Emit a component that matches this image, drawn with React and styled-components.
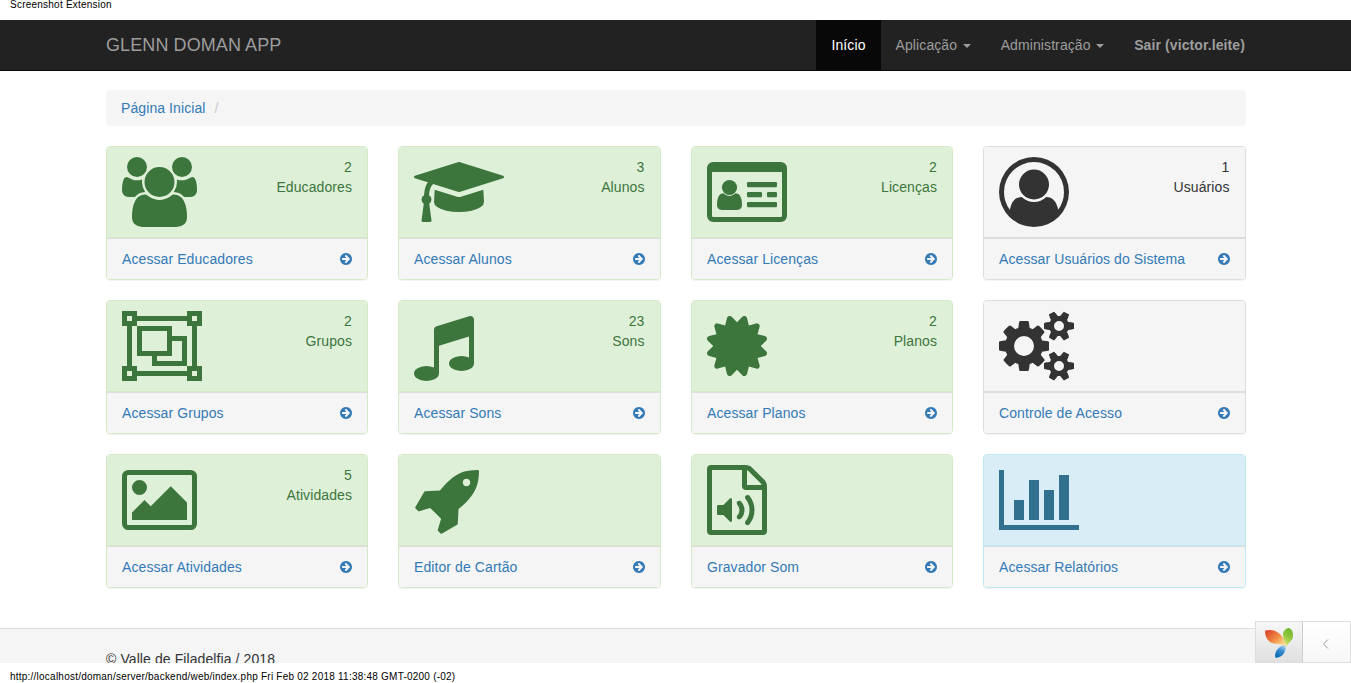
import React from "react";
import styled, { createGlobalStyle, css } from "styled-components";

const GlobalStyle = createGlobalStyle`
  * { box-sizing: border-box; }
  body {
    margin: 0;
    background: #fff;
    color: #333;
    font: 14px/20px "Liberation Sans", Arial, sans-serif;
    letter-spacing: 0.09px;
    overflow: hidden;
  }
  a { color: inherit; text-decoration: none; }
`;

const Sheet = styled.div`
  display: flex;
  flex-direction: column;
  height: 683px;
  overflow: hidden;
`;

const Caption = styled.div`
  flex: none;
  height: 20px;
  padding: 0 10px;
  overflow: hidden;
  color: #000;
  font-size: 10px;
  line-height: ${(p) => p.$line}px;
  letter-spacing: 0.23px;
  white-space: nowrap;
`;

const Viewport = styled.div`
  position: relative;
  flex: none;
  display: flex;
  flex-direction: column;
  height: 643px;
  overflow: hidden;
`;

const Container = styled.div`
  width: 1140px;
  margin: 0 auto;
`;

const Navbar = styled.header`
  flex: none;
  height: 51px;
  background: #222;
  border-bottom: 1px solid #080808;
`;

const NavbarInner = styled(Container)`
  display: flex;
  justify-content: space-between;
`;

const Brand = styled.a`
  padding: 15px 0 15px 0.5px;
  color: #9d9d9d;
  font-size: 18px;
`;

const Nav = styled.nav`
  display: flex;
  margin-right: -14.5px;
  letter-spacing: 0.1px;
`;

const NavLink = styled.a`
  display: flex;
  align-items: center;
  height: 50px;
  padding: 0 15px;
  color: #9d9d9d;
  font-weight: ${(p) => (p.$strong ? "bold" : "normal")};
  ${(p) => p.$active && css`
    color: #fff;
    background: #080808;
  `}
`;

const Caret = styled.span`
  margin: 1px 0 0 5.5px;
  border-top: 4px solid currentColor;
  border-left: 4px solid transparent;
  border-right: 4px solid transparent;
`;

const Main = styled(Container)`
  flex: none;
  height: 557px;
  padding-top: 19px;
`;

const Breadcrumb = styled.div`
  display: flex;
  height: 36px;
  margin-bottom: 20px;
  padding: 8px 15.5px;
  border-radius: 4px;
  background: #f5f5f5;
  color: #337ab7;
`;

const Slash = styled.span`
  padding-left: 9px;
  color: #ccc;
`;

const Grid = styled.div`
  display: grid;
  grid-template-columns: repeat(4, 1fr);
  gap: 20px 30px;
`;

const tones = {
  success: { bg: "#dff0d8", border: "#d6e9c6", color: "#3c763d" },
  plain: { bg: "#f5f5f5", border: "#ddd", color: "#333" },
  info: { bg: "#d9edf7", border: "#bce8f1", color: "#31708f" },
};

const PanelHead = styled.div`
  display: flex;
  justify-content: space-between;
  height: 91px;
  padding: 10px 15px;
  background: ${(p) => tones[p.$tone].bg};
  border-bottom: 1px solid ${(p) => tones[p.$tone].border};
  color: ${(p) => tones[p.$tone].color};
`;

const Stat = styled.div`
  text-align: right;
`;

const PanelFoot = styled.a`
  display: flex;
  align-items: center;
  justify-content: space-between;
  height: 41px;
  padding: 0 15px;
  border-top: 1px solid #ddd;
  background: #f5f5f5;
  color: #337ab7;
`;

/* Odd columns start on a half pixel, so their content is nudged onto whole ones. */
const Panel = styled.section`
  border: 1px solid ${(p) => tones[p.$tone].border};
  border-radius: 4px;
  overflow: hidden;
  box-shadow: 0 1px 1px rgba(0, 0, 0, 0.05);
  &:nth-child(odd) ${PanelHead}, &:nth-child(odd) ${PanelFoot} {
    padding-left: 15.5px;
  }
`;

const Glyph = styled.svg`
  flex: none;
  display: block;
  height: ${(p) => p.$size}px;
  fill: currentColor;
`;

const Footer = styled.footer`
  flex: 1;
  padding-top: 20px;
  border-top: 1px solid #ddd;
  background: #f5f5f5;
`;

const FooterText = styled(Container)`
  padding-left: 0.5px;
`;

const DebugBar = styled.div`
  position: absolute;
  right: 0;
  bottom: 0;
  display: flex;
  width: 96px;
  height: 42px;
  border: 1px solid #ddd;
`;

const DebugLogo = styled.div`
  display: flex;
  align-items: center;
  justify-content: center;
  width: 47px;
  padding-top: 2px;
  border-right: 1px solid #ccc;
  background: linear-gradient(#f7f7f7, #e0e0e0);
`;

const DebugToggle = styled.div`
  flex: 1;
  display: flex;
  align-items: center;
  justify-content: center;
  padding: 3px 1px 0 0;
  background: linear-gradient(#fff, #f7f7f7);
`;

/* Large icons: [viewBox, drawing]; every one is 70px high. */
const icons = {
  users: ["64 0 1920 1792", <path d="M657 896q-162 5-265 128h-134q-82 0-138-40.500t-56-118.500q0-353 124-353 6 0 43.500 21t97.500 42.500 119 21.500q67 0 133-23-5 37-5 66 0 139 81 256zm1071 637q0 120-73 189.500t-194 69.500h-874q-121 0-194-69.500t-73-189.500q0-53 3.500-103.500t14-109 26.500-108.500 43-97.500 62-81 85.500-53.500 111.500-20q10 0 43 21.500t73 48 107 48 135 21.500 135-21.500 107-48 73-48 43-21.500q61 0 111.500 20t85.500 53.500 62 81 43 97.500 26.500 108.500 14 109 3.500 103.500zm-1024-1277q0 106-75 181t-181 75-181-75-75-181 75-181 181-75 181 75 75 181zm704 384q0 159-112.500 271.500t-271.500 112.500-271.500-112.500-112.500-271.500 112.500-271.500 271.500-112.500 271.500 112.500 112.500 271.500zm576 225q0 78-56 118.500t-138 40.500h-134q-103-123-265-128 81-117 81-256 0-29-5-66 66 23 133 23 59 0 119-21.500t97.500-42.500 43.500-21q124 0 124 353zm-128-609q0 106-75 181t-181 75-181-75-75-181 75-181 181-75 181 75 75 181z" />],
  graduation: ["0 0 2304 1792", <path d="M1774 836l18 316q4 69-82 128t-235 93.500-323 34.500-323-34.500-235-93.500-82-128l18-316 574 181q22 7 48 7t48-7zm530-324q0 23-22 31l-1120 352q-4 1-10 1t-10-1l-652-206q-43 34-71 111.500t-34 178.500q63 36 63 109 0 69-58 107l58 433q2 14-8 25-9 11-24 11h-192q-15 0-24-11-10-11-8-25l58-433q-58-38-58-107 0-73 65-111 11-207 98-330l-333-104q-22-8-22-31t22-31l1120-352q4-1 10-1t10 1l1120 352q22 8 22 31z" />],
  idCard: ["0 0 80 70", <>
    <path fillRule="evenodd" d="M6.2 5H73.8A6.2 6.2 0 0 1 80 11.200V58.800A6.200 6.200 0 0 1 73.800 65H6.200A6.200 6.200 0 0 1 0 58.800V11.200A6.200 6.200 0 0 1 6.200 5zM5 15V58.800Q5 60 6.200 60H73.800Q75 60 75 58.800V15z" />
    <circle cx="22.500" cy="30.500" r="7.600" />
    <path d="M16.300 36.300Q10 36.500 10 47.800C10 51 12 53 14.800 53H30.200C33 53 35 51 35 47.800Q35 36.500 28.700 36.300Q22.500 41.600 16.300 36.300z" />
    <rect x="40" y="25" width="30" height="5.300" rx="1.200" />
    <rect x="40" y="35" width="15" height="5.300" rx="1.200" />
    <rect x="60" y="35" width="10" height="5.300" rx="1.200" />
    <rect x="40" y="45" width="30" height="5.300" rx="1.200" />
  </>],
  userCircle: ["0 0 1792 1792", <path fillRule="evenodd" d="M896 0q182 0 348 71t286 191 191 286 71 348q0 181-70.500 347t-190.500 286-286 191.500-349 71.500-349-71-285.500-191.500-190.500-286-71-347.500 71-348 191-286 286-191 348-71zm619 1351q149-205 149-455 0-156-61-298t-164-245-245-164-298-61-298 61-245 164-164 245-61 298q0 250 149 455 66-327 306-327 131 128 313 128t313-128q240 0 306 327zm-235-647q0-159-112.500-271.500t-271.500-112.500-271.500 112.500-112.500 271.500 112.500 271.500 271.500 112.500 271.500-112.500 112.500-271.500z" />],
  group: ["0 0 80 70", <path fillRule="evenodd" d="M0 0H15V5H65V0H80V15H75V55H80V70H65V65H15V70H0V55H5V15H0zM5 5V10H10V5zM70 5V10H75V5zM5 60V65H10V60zM70 60V65H75V60zM15 10V15H10V55H15V60H65V55H70V15H65V10zM15 15H50V25H65V55H30V45H15zM20 20V40H45V20zM50 30V45H35V50H60V30z" />],
  music: ["128 0 1536 1792", <path d="M1664 224v1120q0 50-34 89t-86 60.500-103.500 32-96.500 10.500-96.500-10.500-103.500-32-86-60.500-34-89 34-89 86-60.500 103.500-32 96.500-10.500q105 0 192 39v-537l-768 237v709q0 50-34 89t-86 60.500-103.500 32-96.500 10.500-96.500-10.500-103.500-32-86-60.500-34-89 34-89 86-60.500 103.500-32 96.500-10.500q105 0 192 39v-967q0-31 19-56.500t49-35.500l832-256q12-4 28-4 40 0 68 28t28 68z" />],
  certificate: ["128 0 1536 1792", <path d="M1504 896l138 135q30 28 20 70-12 41-52 51l-188 48 53 186q12 41-19 70-29 31-70 19l-186-53-48 188q-10 40-51 52-12 2-19 2-31 0-51-22l-135-138-135 138q-28 30-70 20-41-11-51-52l-48-188-186 53q-41 12-70-19-31-29-19-70l53-186-188-48q-40-10-52-51-10-42 20-70l138-135-138-135q-30-28-20-70 12-41 52-51l188-48-53-186q-12-41 19-70 29-31 70-19l186 53 48-188q10-41 51-51 41-12 70 19l135 139 135-139q29-30 70-19 41 10 51 51l48 188 186-53q41-12 70 19 31 29 19 70l-53 186 188 48q40 10 52 51 10 42-20 70z" />],
  cogs: ["0 0 1920 1792", <path d="M896 896q0-106-75-181t-181-75-181 75-75 181 75 181 181 75 181-75 75-181zm768 512q0-52-38-90t-90-38-90 38-38 90q0 53 37.500 90.500t90.500 37.500 90.500-37.500 37.500-90.500zm0-1024q0-52-38-90t-90-38-90 38-38 90q0 53 37.500 90.500t90.500 37.500 90.500-37.500 37.500-90.500zm-384 421v185q0 10-7 19.500t-16 10.500l-155 24q-11 35-32 76 34 48 90 115 7 11 7 20 0 12-7 19-23 30-82.500 89.500t-78.500 59.500q-11 0-21-7l-115-90q-37 19-77 31-11 108-23 155-7 24-30 24h-186q-11 0-20-7.500t-10-17.500l-23-153q-34-10-75-31l-118 89q-7 7-20 7-11 0-21-8-144-133-144-160 0-9 7-19 10-14 41-53t47-61q-23-44-35-82l-152-24q-10-1-17-9.500t-7-19.500v-185q0-10 7-19.500t16-10.500l155-24q11-35 32-76-34-48-90-115-7-11-7-20 0-12 7-20 22-30 82-89t79-59q11 0 21 7l115 90q34-18 77-32 11-108 23-154 7-24 30-24h186q11 0 20 7.500t10 17.500l23 153q34 10 75 31l118-89q8-7 20-7 11 0 21 8 144 133 144 160 0 8-7 19-12 16-42 54t-45 60q23 48 34 82l152 23q10 2 17 10.500t7 19.500zm640 533v140q0 16-149 31-12 27-30 52 51 113 51 138 0 4-4 7-122 71-124 71-8 0-46-47t-52-68q-20 2-30 2t-30-2q-14 21-52 68t-46 47q-2 0-124-71-4-3-4-7 0-25 51-138-18-25-30-52-149-15-149-31v-140q0-16 149-31 13-29 30-52-51-113-51-138 0-4 4-7 4-2 35-20t59-34 30-16q8 0 46 46.500t52 67.500q20-2 30-2t30 2q51-71 92-112l6-2q4 0 124 70 4 3 4 7 0 25-51 138 17 23 30 52 149 15 149 31zm0-1024v140q0 16-149 31-12 27-30 52 51 113 51 138 0 4-4 7-122 71-124 71-8 0-46-47t-52-68q-20 2-30 2t-30-2q-14 21-52 68t-46 47q-2 0-124-71-4-3-4-7 0-25 51-138-18-25-30-52-149-15-149-31v-140q0-16 149-31 13-29 30-52-51-113-51-138 0-4 4-7 4-2 35-20t59-34 30-16q8 0 46 46.500t52 67.500q20-2 30-2t30 2q51-71 92-112l6-2q4 0 124 70 4 3 4 7 0 25-51 138 17 23 30 52 149 15 149 31z" />],
  picture: ["0 0 1920 1792", <path d="M640 576q0 80-56 136t-136 56-136-56-56-136 56-136 136-56 136 56 56 136zm1024 384v448h-1408v-192l320-320 160 160 512-512zm96-704h-1600q-13 0-22.500 9.500t-9.500 22.500v1216q0 13 9.500 22.500t22.500 9.500h1600q13 0 22.500-9.500t9.500-22.500v-1216q0-13-9.500-22.500t-22.500-9.500zm160 32v1216q0 66-47 113t-113 47h-1600q-66 0-113-47t-47-113v-1216q0-66 47-113t113-47h1600q66 0 113 47t47 113z" />],
  rocket: ["0 0 1664 1792", <path d="M1440 448q0-40-28-68t-68-28-68 28-28 68 28 68 68 28 68-28 28-68zm224-288q0 249-75.500 430.500t-253.500 360.500q-81 80-195 176l-20 379q-2 16-16 26l-384 224q-7 4-16 4-12 0-23-9l-64-64q-13-14-8-32l85-276-281-281-276 85q-3 1-9 1-14 0-23-9l-64-64q-17-19-5-39l224-384q10-14 26-16l379-20q96-114 176-195 188-187 358-258t431-71q14 0 24 9.500t10 22.500z" />],
  audio: ["128 0 1536 1792", <path d="M1596 380q28 28 48 76t20 88v1152q0 40-28 68t-68 28h-1344q-40 0-68-28t-28-68v-1600q0-40 28-68t68-28h896q40 0 88 20t76 48zm-444-244v376h376q-10-29-22-41l-313-313q-12-12-41-22zm384 1528v-1024h-416q-40 0-68-28t-28-68v-416h-768v1536h1280zm-788-813q20 8 20 29v544q0 21-20 30-8 2-12 2-12 0-23-9l-166-167h-131q-14 0-23-9t-9-23v-192q0-14 9-23t23-9h131l166-167q16-15 35-7zm417 689q31 0 50-24 129-159 129-363t-129-363q-16-21-43-24t-47 14q-21 17-23.500 43.500t14.500 47.500q100 123 100 282t-100 282q-17 21-14.500 47.500t23.500 42.500q18 15 40 15zm-211-148q27 0 47-20 87-93 87-219t-87-219q-18-19-45-20t-46 17-20 44.500 18 46.500q52 57 52 131t-52 131q-19 20-18 46.500t20 44.500q20 17 44 17z" />],
  chart: ["0 0 80 70", <path d="M0 5H5V60H80V65H0zM15 35H25V55H15zM30 15H40V55H30zM45 25H55V55H45zM60 10H70V55H60z" />],
};

function Icon({ name }) {
  const [viewBox, drawing] = icons[name];
  const [, , w, h] = viewBox.split(" ").map(Number);
  return <Glyph $size={70} width={(w / h) * 70} viewBox={viewBox}>{drawing}</Glyph>;
}

function ArrowCircle() {
  return (
    <Glyph $size={14} width={12} viewBox="128 0 1536 1792">
      <path d="M1413 896q0-27-18-45l-91-91-362-362q-18-18-45-18t-45 18l-91 91q-18 18-18 45t18 45l189 189h-502q-26 0-45 19t-19 45v128q0 26 19 45t45 19h502l-189 189q-19 19-19 45t19 45l91 91q18 18 45 18t45-18l362-362 91-91q18-18 18-45zm251 0q0 209-103 385.500t-279.500 279.500-385.500 103-385.500-103-279.500-279.500-103-385.500 103-385.500 279.500-279.500 385.500-103 385.500 103 279.500 279.500 103 385.500z" fillRule="evenodd" />
    </Glyph>
  );
}

function YiiLogo() {
  return (
    <svg width="28" height="30" viewBox="0 0 28 30">
      <defs>
        <linearGradient id="leafRed" x1="0" y1="0.1" x2="1" y2="1">
          <stop offset="0" stopColor="#dc4229" />
          <stop offset="0.5" stopColor="#f08a45" />
          <stop offset="1" stopColor="#fff09a" />
        </linearGradient>
        <linearGradient id="leafGreen" x1="0.7" y1="0" x2="0.3" y2="1">
          <stop offset="0" stopColor="#6db52f" />
          <stop offset="0.5" stopColor="#94c93d" />
          <stop offset="1" stopColor="#e4e97c" />
        </linearGradient>
        <linearGradient id="leafBlue" x1="0.8" y1="0" x2="0.3" y2="1">
          <stop offset="0" stopColor="#b5d5ec" />
          <stop offset="0.45" stopColor="#3c8fd0" />
          <stop offset="1" stopColor="#0568b3" />
        </linearGradient>
      </defs>
      <path fill="url(#leafRed)" d="M0.200 2.600C4 1.200 10 1.800 14 5.200C18.500 9.200 20 13.500 20.200 18C16.500 15.500 11.500 16.600 7 15C2.200 13.200 -0.400 7.500 0.200 2.600z" />
      <path fill="url(#leafGreen)" d="M23.500 0C26 0.300 28.200 3.500 28 7.500C27.800 13 23.500 14.500 21 18.800C20.600 14.500 17.600 10.500 18 6.500C18.300 3 20.600 0.300 23.500 0z" />
      <path fill="url(#leafBlue)" d="M19 17C20.700 18 21 19.500 20.500 21.500C19.500 26.500 15.500 30 10.300 29.600C9.200 24.500 12.800 18.800 19 17z" />
    </svg>
  );
}

const cards = [
  { icon: "users", tone: "success", count: 2, label: "Educadores", link: "Acessar Educadores" },
  { icon: "graduation", tone: "success", count: 3, label: "Alunos", link: "Acessar Alunos" },
  { icon: "idCard", tone: "success", count: 2, label: "Licenças", link: "Acessar Licenças" },
  { icon: "userCircle", tone: "plain", count: 1, label: "Usuários", link: "Acessar Usuários do Sistema" },
  { icon: "group", tone: "success", count: 2, label: "Grupos", link: "Acessar Grupos" },
  { icon: "music", tone: "success", count: 23, label: "Sons", link: "Acessar Sons" },
  { icon: "certificate", tone: "success", count: 2, label: "Planos", link: "Acessar Planos" },
  { icon: "cogs", tone: "plain", link: "Controle de Acesso" },
  { icon: "picture", tone: "success", count: 5, label: "Atividades", link: "Acessar Atividades" },
  { icon: "rocket", tone: "success", link: "Editor de Cartão" },
  { icon: "audio", tone: "success", link: "Gravador Som" },
  { icon: "chart", tone: "info", link: "Acessar Relatórios" },
];

function Card({ icon, tone, count, label, link }) {
  return (
    <Panel $tone={tone}>
      <PanelHead $tone={tone}>
        <Icon name={icon} />
        {label && (
          <Stat>
            <div>{count}</div>
            <div>{label}</div>
          </Stat>
        )}
      </PanelHead>
      <PanelFoot href="#">
        <span>{link}</span>
        <ArrowCircle />
      </PanelFoot>
    </Panel>
  );
}

export default function App() {
  return (
    <Sheet>
      <GlobalStyle />
      <Caption $line={9}>Screenshot Extension</Caption>
      <Viewport>
        <Navbar>
          <NavbarInner>
            <Brand href="#">GLENN DOMAN APP</Brand>
            <Nav>
              <NavLink href="#" $active>Início</NavLink>
              <NavLink href="#">Aplicação<Caret /></NavLink>
              <NavLink href="#">Administração<Caret /></NavLink>
              <NavLink href="#" $strong>Sair (victor.leite)</NavLink>
            </Nav>
          </NavbarInner>
        </Navbar>
        <Main>
          <Breadcrumb>
            <a href="#">Página Inicial</a>
            <Slash>/</Slash>
          </Breadcrumb>
          <Grid>
            {cards.map((card) => <Card key={card.link} {...card} />)}
          </Grid>
        </Main>
        <Footer>
          <FooterText>© Valle de Filadelfia / 2018</FooterText>
        </Footer>
        <DebugBar>
          <DebugLogo><YiiLogo /></DebugLogo>
          <DebugToggle>
            <svg width="8" height="12" viewBox="0 0 8 12" fill="none" stroke="#999" strokeWidth="1">
              <path d="M6 1.500L1.500 6L6 10.500" />
            </svg>
          </DebugToggle>
        </DebugBar>
      </Viewport>
      <Caption $line={27}>http://localhost/doman/server/backend/web/index.php Fri Feb 02 2018 11:38:48 GMT-0200 (-02)</Caption>
    </Sheet>
  );
}
